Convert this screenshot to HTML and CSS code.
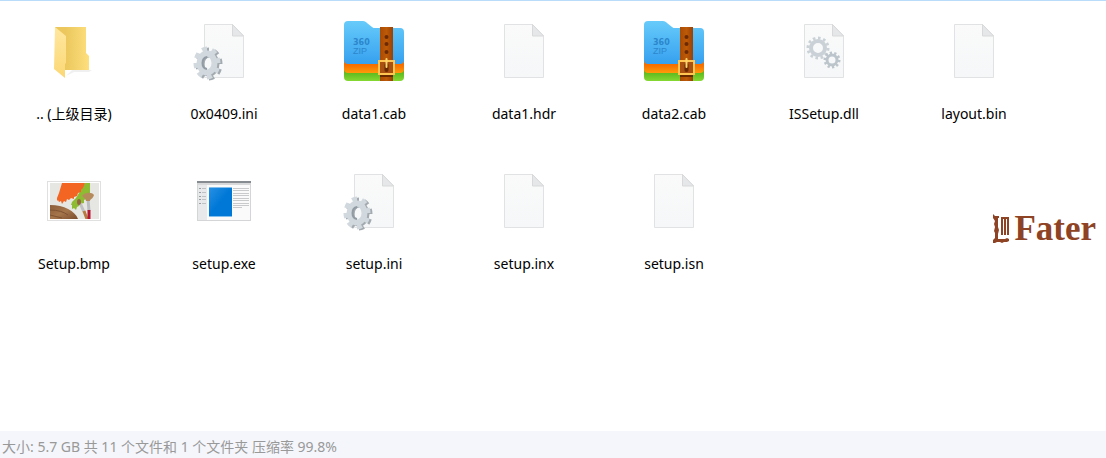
FILE: index.html
```html
<!DOCTYPE html>
<html lang="zh-CN">
<head>
  <meta charset="UTF-8">
  <meta name="viewport" content="width=device-width, initial-scale=1.0">
  <title>Setup</title>
  <link rel="stylesheet" href="styles.css">
</head>
<body>
  <!-- shared icons -->
  <svg class="defs" width="0" height="0">
    <defs>
      <linearGradient id="paper" x1="0" y1="0" x2="0" y2="1">
        <stop offset="0" stop-color="#fafafa"/><stop offset="1" stop-color="#f5f7f8"/>
      </linearGradient>
      <linearGradient id="blue" x1="0" y1="0" x2="0" y2="1">
        <stop offset="0" stop-color="#67cbfa"/><stop offset="1" stop-color="#36a0ef"/>
      </linearGradient>
      <linearGradient id="orange" x1="0" y1="0" x2="0" y2="1">
        <stop offset="0.8" stop-color="#f56e00"/><stop offset="1" stop-color="#ff9b0a"/>
      </linearGradient>
      <linearGradient id="green" x1="0" y1="0" x2="0" y2="1">
        <stop offset="0.8" stop-color="#57b51c"/><stop offset="1" stop-color="#86d832"/>
      </linearGradient>
      <linearGradient id="belt" x1="0" y1="0" x2="1" y2="0">
        <stop offset="0" stop-color="#a94b04"/><stop offset="0.5" stop-color="#bd5a08"/><stop offset="1" stop-color="#984005"/>
      </linearGradient>
      <linearGradient id="folder-back" x1="0" y1="0" x2="1" y2="0">
        <stop offset="0.3" stop-color="#ebc75d"/><stop offset="1" stop-color="#fddf7c"/>
      </linearGradient>
      <linearGradient id="folder-front" x1="0" y1="0" x2="0" y2="1">
        <stop offset="0" stop-color="#ffe79f"/><stop offset="1" stop-color="#fbd875"/>
      </linearGradient>
      <linearGradient id="screen" x1="0" y1="0" x2="1" y2="1">
        <stop offset="0" stop-color="#2790e4"/><stop offset="0.5" stop-color="#0078d7"/>
      </linearGradient>
      <linearGradient id="wood" x1="0" y1="0" x2="1" y2="1">
        <stop offset="0" stop-color="#8b5d38"/><stop offset="0.5" stop-color="#a5754b"/><stop offset="1" stop-color="#7b4d2d"/>
      </linearGradient>
      <clipPath id="photo"><rect x="8" y="14" width="49" height="36"/></clipPath>

      <symbol id="page" viewBox="0 0 64 64">
        <path d="M12.5 5.5h28l11 11v42h-39z" fill="url(#paper)" stroke="#e1e2e3"/>
        <path d="M40.5 5.5v11.5h11z" fill="#e6e7e8" stroke="#d8d9da"/>
      </symbol>

      <symbol id="ini" viewBox="0 0 64 64">
        <use href="#page"/>
        <g fill="none" stroke="#a3abb1">
          <ellipse cx="17" cy="45" rx="7.500" ry="9.500" stroke-width="6"/>
          <ellipse cx="17" cy="45" rx="11" ry="14" stroke-width="5" pathLength="16" stroke-dasharray="1 1" stroke-dashoffset="1"/>
        </g>
        <g fill="none" stroke="#d1d9df">
          <ellipse cx="15" cy="44" rx="7.500" ry="9.500" stroke-width="6"/>
          <ellipse cx="15" cy="44" rx="11" ry="14" stroke-width="5" pathLength="16" stroke-dasharray="1 1" stroke-dashoffset="1"/>
        </g>
        <path d="M15 38c-6 1-6 11 0 12" fill="none" stroke="#929ba3" stroke-width="2"/>
      </symbol>

      <symbol id="dll" viewBox="0 0 64 64">
        <use href="#page"/>
        <g fill="none" stroke="#cbd2d7">
          <circle cx="26" cy="29" r="7" stroke-width="4"/>
          <circle cx="26" cy="29" r="10" stroke-width="3" pathLength="24" stroke-dasharray="1 1"/>
        </g>
        <g fill="none" stroke="#bcc5cb">
          <circle cx="40" cy="41" r="5" stroke-width="3"/>
          <circle cx="40" cy="41" r="7" stroke-width="3" pathLength="20" stroke-dasharray="1 1"/>
        </g>
      </symbol>

      <symbol id="zip" viewBox="0 0 64 64">
        <rect x="2" y="14" width="60" height="48" rx="4" fill="url(#green)"/>
        <path d="M2 14h60v36a4 4 0 0 1-4 4H6a4 4 0 0 1-4-4z" fill="url(#orange)"/>
        <path d="M6 2h15c2 0 3 1 4 2l5 4c1 1 2 1 3 1h25a4 4 0 0 1 4 4v29a4 4 0 0 1-4 3H6a4 4 0 0 1-4-4V6a4 4 0 0 1 4-4z" fill="url(#blue)"/>
        <text class="zip-brand" x="11" y="26">360</text>
        <text class="zip-name" x="11" y="35">ZIP</text>
        <rect x="38" y="8" width="13" height="54" fill="url(#belt)"/>
        <g fill="#6b2900">
          <circle cx="44.500" cy="18" r="2"/><circle cx="44.500" cy="25" r="2"/><circle cx="44.500" cy="33" r="2"/>
          <rect x="38" y="56" width="13" height="2"/>
        </g>
        <rect x="37" y="42" width="15" height="13" fill="#aa5010" stroke="#ffc652" stroke-width="2"/>
        <path d="M44.500 46v5" stroke="#6b2900" stroke-width="4" stroke-linecap="round"/>
        <path d="M44.500 40v8" stroke="#ffd66e" stroke-width="2" stroke-linecap="round"/>
      </symbol>

      <symbol id="folder" viewBox="0 0 64 64">
        <path d="M24 57l6-6h20l-3 2H32z" fill="#f0f0f0"/>
        <path d="M13 8h31v26l3 3v14H13z" fill="url(#folder-back)"/>
        <path d="M13 8l11 9v27l-1 1v14l-11-9z" fill="url(#folder-front)"/>
      </symbol>

      <symbol id="picture" viewBox="0 0 64 64">
        <rect x="5.500" y="12.500" width="53" height="39" fill="#fff" stroke="#e0e0e0"/>
        <g clip-path="url(#photo)">
          <rect x="8" y="14" width="49" height="36" fill="#e6e7e2"/>
          <path d="M43 14h5v12l-3 1-1 3-2 1v3l-4 1-1 2-2 1-1 3-2-2-2 1v-4l-1 0 1-3 4-4z" fill="#8dbb32"/>
          <path d="M20 14h23l-2 5-2 2v2l-3 1-1 3-3 1v2l-3-1-2 2-2-1-1 3-2-1-2 3-1-3-2 1-1-2-1 1v-3l2-5z" fill="#f26522"/>
          <path d="M8 36c14 0 25 6 28 14H8z" fill="url(#wood)"/>
          <path d="M8 41c8 0 14 2 18 5M8 46l12 3" stroke="#7e5232" fill="none"/>
          <path d="M38 34l4 9" stroke="#bfc2c4" stroke-width="3"/>
          <path d="M42 42l3 8" stroke="#b57a40" stroke-width="3"/>
          <ellipse cx="37" cy="33" rx="2" ry="3" fill="#966642"/>
          <path d="M46 30l1 12" stroke="#b9bdc0" stroke-width="3"/>
          <path d="M47 41v9" stroke="#b61735" stroke-width="3"/>
          <path d="M40 27c3-4 10-4 12-1-1 4-4 4-4 6h-4c0-2-2-3-4-5z" fill="#b68b5c"/>
        </g>
      </symbol>

      <symbol id="exe" viewBox="0 0 64 64">
        <rect x="5.500" y="12.500" width="53" height="39" fill="#fafafa" stroke="#d4d5d6"/>
        <rect x="5" y="12" width="54" height="2" fill="#858b90"/>
        <rect x="6" y="14" width="52" height="2" fill="#d6d8d9"/>
        <rect x="6" y="16" width="9" height="35" fill="#e8e9ea"/>
        <path d="M7 19.500h2M7 23.500h2M7 27.500h2M7 30.500h2M7 34.500h2" stroke="#9a9fa3"/>
        <path d="M10 19.500h4M10 23.500h4M10 27.500h4M10 30.500h4M10 34.500h4" stroke="#bfc2c4"/>
        <rect x="17" y="18" width="23" height="30" fill="#83bfed"/>
        <rect x="17" y="19" width="23" height="28" fill="url(#screen)"/>
        <path d="M41 19.500h16M41 21.500h16M41 24.500h16M41 26.500h16M41 29.500h16M41 31.500h16M41 34.500h16M41 36.500h16M41 38.500h9" stroke="#c8cacc"/>
      </symbol>
    </defs>
  </svg>

  <main>
    <ul class="files">
      <li class="file"><svg class="icon"><use href="#folder"/></svg><span>.. (上级目录)</span></li>
      <li class="file"><svg class="icon"><use href="#ini"/></svg><span>0x0409.ini</span></li>
      <li class="file"><svg class="icon"><use href="#zip"/></svg><span>data1.cab</span></li>
      <li class="file"><svg class="icon"><use href="#page"/></svg><span>data1.hdr</span></li>
      <li class="file"><svg class="icon"><use href="#zip"/></svg><span>data2.cab</span></li>
      <li class="file"><svg class="icon"><use href="#dll"/></svg><span>ISSetup.dll</span></li>
      <li class="file"><svg class="icon"><use href="#page"/></svg><span>layout.bin</span></li>
      <li class="file"><svg class="icon"><use href="#picture"/></svg><span>Setup.bmp</span></li>
      <li class="file"><svg class="icon"><use href="#exe"/></svg><span>setup.exe</span></li>
      <li class="file"><svg class="icon"><use href="#ini"/></svg><span>setup.ini</span></li>
      <li class="file"><svg class="icon"><use href="#page"/></svg><span>setup.inx</span></li>
      <li class="file"><svg class="icon"><use href="#page"/></svg><span>setup.isn</span></li>
    </ul>
    <div class="watermark">
      <svg width="18" height="32" viewBox="0 0 18 32" fill="currentColor">
        <path d="M1 1l2 2h4v2H6v9l1 3-1 4v5h7l2-1 2 1v2l-2 1h-3l-2 1-2-1H5l-2 1H1v-3l2-2v-5L2 18l1-4-1-3 1-3-2-3z"/>
        <path d="M9 4h8v18h-2V6h-1v16h-2V6h-1v16H9z"/>
      </svg>
      <span>Fater</span>
    </div>
  </main>

  <footer class="status">大小: 5.7 GB 共 11 个文件和 1 个文件夹 压缩率 99.8%</footer>
</body>
</html>
```
FILE: styles.css
```css
* {
  box-sizing: border-box;
}
body {
  margin: 0;
  min-height: 100vh;
  display: flex;
  flex-direction: column;
  background-color: #fff;
  border-top: 1px solid #b9dcfa;
  color: #000;
  font-family: "Noto Sans", "Noto Sans CJK SC", sans-serif;
  font-size: 14px;
  line-height: 20px;
}
.defs {
  position: absolute;
}
main {
  position: relative;
  flex: 1;
}
.files {
  display: grid;
  grid-template-columns: repeat(auto-fill, 148px);
  column-gap: 2px;
  row-gap: 45px;
  margin: 0;
  padding: 18px 0;
  list-style: none;
}
.file {
  display: flex;
  flex-direction: column;
  align-items: center;
  gap: 21px;
}
.icon {
  width: 64px;
  height: 64px;
}
.zip-brand {
  font-family: "DejaVu Sans", sans-serif;
  font-size: 8px;
  font-weight: bold;
  fill: #2c86cc;
}
.zip-name {
  font-family: "Liberation Sans", sans-serif;
  font-size: 9px;
  fill: #2c86cc;
}
.watermark {
  position: absolute;
  top: 212px;
  right: 10px;
  display: flex;
  align-items: center;
  gap: 4px;
  color: #8f4325;
  font-family: "Liberation Serif", serif;
  font-size: 35px;
  font-weight: bold;
  line-height: 32px;
}
.status {
  padding: 6px 2px 1px;
  background-color: #f4f6fb;
  color: #999;
}
```
